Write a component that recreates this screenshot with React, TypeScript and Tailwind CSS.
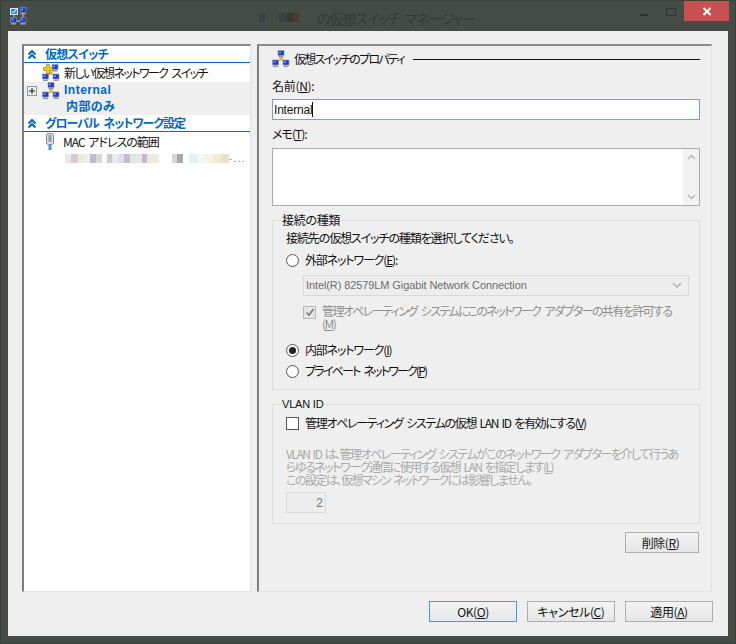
const font = "font-['Noto_Sans_CJK_JP','Liberation_Sans',sans-serif] [font-feature-settings:'palt']";

function U({ children }: { children: string }) {
  return <span className="underline underline-offset-1">{children}</span>;
}

function Monitor({ x, y }: { x: number; y: number }) {
  return (
    <g>
      <rect x={x} y={y} width="6" height="5" fill="#1d3cc4" stroke="#8d99b8" strokeWidth="0.6" />
      <rect x={x + 1} y={y + 1} width="2" height="2" fill="#6f8cf0" />
      <rect x={x + 0.5} y={y + 5.5} width="5" height="1.6" fill="#9a9a9a" />
    </g>
  );
}

function SwitchIcon({ plus = false }: { plus?: boolean }) {
  return (
    <svg width="18" height="18" viewBox="0 0 18 18" className="shrink-0">
      <path d="M9 6v4M4 11.5 L9 9.5 L14 11.5" stroke="#c9a23a" strokeWidth="1" fill="none" />
      <Monitor x={plus ? 10 : 6} y={0.5} />
      <Monitor x={0.5} y={10} />
      <Monitor x={11} y={10} />
      <rect x="7.5" y="8" width="3" height="2.5" fill="#f0b400" />
      {plus && <path d="M4.5 0.5h3v3h3v3h-3v3h-3v-3h-3v-3h3z" fill="#f3c618" stroke="#a5851c" strokeWidth="0.7" />}
    </svg>
  );
}

function AppIcon() {
  return (
    <svg width="18" height="18" viewBox="0 0 18 18" className="shrink-0">
      <path d="M4 8v5M13 7v5M5 14h8" stroke="#c7ccd0" strokeWidth="1" fill="none" />
      <Monitor x={10} y={0.5} />
      <Monitor x={0.5} y={10.5} />
      <Monitor x={10} y={10.5} />
      <rect x="0.5" y="1.5" width="7" height="6" fill="#2a8fd8" stroke="#dce8f0" />
      <path d="M2 4.5l1.5 1.5 3-4" stroke="#ffffff" strokeWidth="1" fill="none" />
    </svg>
  );
}

function Collapse() {
  return (
    <svg width="10" height="9" viewBox="0 0 10 9" className="shrink-0">
      <path d="M1.5 4.5 5 1l3.5 3.5M1.5 8.5 5 5l3.5 3.5" stroke="#0066cc" strokeWidth="2" fill="none" />
    </svg>
  );
}

function Radio({ on = false }: { on?: boolean }) {
  return (
    <span className="w-[13px] h-[13px] rounded-full border border-[#555] bg-white flex items-center justify-center shrink-0">
      {on && <span className="w-[7px] h-[7px] rounded-full bg-[#222]" />}
    </span>
  );
}

function Blur({ cells }: { cells: [number, string][] }) {
  return (
    <div className="flex h-[9px]">
      {cells.map(([w, c], i) => (
        <span key={i} className="h-full" style={{ width: w, background: c }} />
      ))}
    </div>
  );
}

function Section({ label, tracking }: { label: string; tracking: string }) {
  return (
    <div className="flex items-center h-[16px] border-b border-[#0066cc] pl-[3px] box-content">
      <Collapse />
      <span className={`ml-[8px] text-[12px] font-bold text-[#0066cc] leading-none ${tracking}`}>{label}</span>
    </div>
  );
}

function Btn({ children, w = "w-[88px]", primary = false, pad = "" }: { children: React.ReactNode; w?: string; primary?: boolean; pad?: string }) {
  return (
    <div className={`${w} ${pad} h-[21px] flex items-center justify-center text-[12px] text-[#111] tracking-[-0.4px] bg-gradient-to-b from-[#f3f3f3] to-[#e6e6e6] border ${primary ? "border-[#3f9ae8]" : "border-[#aeaeae]"}`}>
      {children}
    </div>
  );
}

export default function App() {
  return (
    <div className={`${font} w-[736px] h-[644px] bg-[#454c46] border border-[#3a403b] flex flex-col overflow-hidden`}>
      <header className="h-[30px] shrink-0 flex items-start">
        <div className="ml-[9px] mt-[6px]">
          <AppIcon />
        </div>
        <div className="ml-[231px] mt-[12px] w-[6px] h-[9px] bg-[#3a4248]" />
        <div className="ml-[14px] mt-[12px] flex h-[9px]">
          <span className="w-[8px] bg-[#3a4248]" />
          <span className="w-[6px] bg-[#3d3533]" />
          <span className="w-[6px] bg-[#4a3a38]" />
        </div>
        <span className="ml-[18px] mt-[6px] text-[14px] text-[#343a36] leading-[22px] tracking-[-1.1px] [word-spacing:3px]">の仮想スイッチ マネージャー</span>
        <div className="ml-auto flex">
          <span className="w-[8px] h-[2px] bg-[#2c312d] mt-[13px] mr-[18px]" />
          <span className="w-[10px] h-[8px] border border-[#2f3530] mt-[7px] mr-[8px]" />
          <div className="w-[45px] h-[20px] bg-[#c75050] flex items-center justify-center mr-[6px]">
            <svg width="10" height="9" viewBox="0 0 10 9">
              <path d="M1.5 1 8.5 8M8.5 1 1.5 8" stroke="#fff" strokeWidth="2" />
            </svg>
          </div>
        </div>
      </header>

      <div className="mx-[7px] h-[605px] bg-[#efefef] flex flex-col">
        <div className="flex pl-[14px] pt-[13px] gap-[6px]">
          <aside className="w-[229px] h-[548px] bg-white border-t-2 border-l-2 border-t-[#8a8a8a] border-l-[#7c7c7c] border-r border-b border-r-[#e2e2e2] border-b-[#e2e2e2] text-[12px] text-[#111]">
            <Section label="仮想スイッチ" tracking="tracking-[-0.7px]" />
            <div className="h-[19px] flex items-center pl-[18px]">
              <SwitchIcon plus />
              <span className="ml-[4px] tracking-[-1.6px] [word-spacing:3px] leading-none">新しい仮想ネットワーク スイッチ</span>
            </div>
            <div className="h-[33px] bg-[#efefef] flex items-start pl-[3px]">
              <span className="w-[10px] h-[10px] mt-[4px] border border-[#8a9aa8] bg-[#eef2f5] flex items-center justify-center shrink-0">
                <svg width="6" height="6" viewBox="0 0 6 6"><path d="M0 3h6M3 0v6" stroke="#111" /></svg>
              </span>
              <span className="ml-[5px]"><SwitchIcon /></span>
              <div className="ml-[4px] font-bold text-[#0066cc] text-[12px] leading-[15px] pt-[1px]">
                <div className="font-['Liberation_Sans','Noto_Sans_CJK_JP',sans-serif] tracking-[0.5px]">Internal</div>
                <div className="ml-[2px] tracking-[0.4px]">内部のみ</div>
              </div>
            </div>
            <Section label="グローバル ネットワーク設定" tracking="tracking-[-1px] [word-spacing:3px]" />
            <div className="h-[19px] flex items-center pl-[20px]">
              <svg width="12" height="18" viewBox="0 0 12 18" className="shrink-0">
                <rect x="2.5" y="0.5" width="7" height="11" rx="2" fill="#d9dfe3" stroke="#7f8b94" />
                <rect x="4.5" y="2" width="3" height="7" fill="#8fa0ad" />
                <path d="M6 12v5" stroke="#2e9be0" strokeWidth="3" />
              </svg>
              <span className="ml-[7px] tracking-[-1px] [word-spacing:2px] leading-none">MAC アドレスの範囲</span>
            </div>
            <div className="flex items-center pl-[41px] mt-[3px]">
              <Blur cells={[[6, "#ece6ec"], [7, "#d8c8d8"], [6, "#f0ecd8"], [6, "#eeeeee"], [6, "#c0bcd0"], [6, "#d8d8d8"], [5, "#ffffff"], [5, "#cccccc"], [6, "#e4ecec"], [6, "#e0dce8"], [6, "#c8b8d0"], [6, "#dce8d8"], [6, "#ece4ec"], [5, "#c8b8cc"], [6, "#ece8e0"], [6, "#f0ecdc"], [13, "#ffffff"], [5, "#d4d4d4"], [6, "#a8a8a8"], [6, "#ffffff"], [9, "#e0f2f2"], [7, "#f2f8f8"], [9, "#f6f2e0"], [7, "#f0ead8"], [8, "#ece0c8"]]} />
              <span className="text-[9px] leading-none text-[#777] tracking-[1.5px]">-...</span>
            </div>
          </aside>

          <main className="w-[455px] h-[548px] border-t-2 border-l-2 border-t-[#8a8a8a] border-l-[#7c7c7c] border-r border-b border-r-[#e2e2e2] border-b-[#e2e2e2] text-[12px] text-[#111] pl-[13px] pr-[11px]">
            <div className="flex items-center h-[18px] mt-[4px]">
              <SwitchIcon />
              <span className="ml-[4px] tracking-[-1.75px] leading-none">仮想スイッチのプロパティ</span>
              <span className="ml-[9px] flex-1 h-px bg-[#111]" />
            </div>
            <div className="mt-[10px] h-[16px] leading-[16px] tracking-[-0.3px]">名前(<U>N</U>):</div>
            <div className="mt-[5px] h-[21px] w-[428px] bg-white border border-[#6fa3d8] flex items-center pl-[1px] leading-none font-['Liberation_Sans','Noto_Sans_CJK_JP',sans-serif] tracking-[-0.2px]">
              Internal<span className="inline-block w-px h-[15px] bg-[#111]" />
            </div>
            <div className="mt-[6px] h-[16px] leading-[16px] tracking-[-1px]">メモ(<U>T</U>):</div>
            <div className="mt-[6px] h-[58px] w-[428px] bg-white border border-[#ababab] flex justify-end">
              <div className="w-[16px] bg-[#f2f2f2] flex flex-col justify-between items-center py-[5px]">
                <svg width="9" height="6" viewBox="0 0 9 6"><path d="M1 5l3.5-3.5L8 5" stroke="#b5b5b5" strokeWidth="1.5" fill="none" /></svg>
                <svg width="9" height="6" viewBox="0 0 9 6"><path d="M1 1l3.5 3.5L8 1" stroke="#b5b5b5" strokeWidth="1.5" fill="none" /></svg>
              </div>
            </div>

            <fieldset className="mt-[6px] w-[428px] h-[178px] border border-[#dcdcdc] pl-[13px] pr-[9px]">
              <legend className="-ml-[5px] px-[1px] leading-[16px] tracking-[-0.3px]">接続の種類</legend>
              <div className="h-[16px] leading-[16px] mt-[2px] tracking-[-1.1px]">接続先の仮想スイッチの種類を選択してください。</div>
              <div className="flex items-center h-[16px] mt-[6px]">
                <Radio />
                <span className="ml-[6px] tracking-[-1.15px]">外部ネットワーク(<U>E</U>):</span>
              </div>
              <div className="ml-[17px] mt-[7px] h-[21px] w-[386px] border border-[#d9d9d9] bg-[#ededed] flex items-center justify-between pl-[2px] pr-[6px] text-[#6d6d6d] font-['Liberation_Sans',sans-serif] text-[11px]">
                <span className="tracking-[-0.1px]">Intel(R) 82579LM Gigabit Network Connection</span>
                <svg width="10" height="7" viewBox="0 0 10 7"><path d="M1 1l4 4 4-4" stroke="#b9b9b9" strokeWidth="1.6" fill="none" /></svg>
              </div>
              <div className="ml-[17px] mt-[8px] flex items-start text-[#8f8f8f]">
                <span className="w-[13px] h-[13px] mt-[2px] border border-[#b8b8b8] bg-[#e6e6e6] flex items-center justify-center shrink-0">
                  <svg width="10" height="9" viewBox="0 0 10 9"><path d="M1.5 4.5 4 7l4.5-6" stroke="#7a7a7a" strokeWidth="1.7" fill="none" /></svg>
                </span>
                <div className="ml-[6px] leading-[13px] tracking-[-1.6px] [word-spacing:3px] whitespace-nowrap">
                  管理オペレーティング システムにこのネットワーク アダプターの共有を許可する<br />
                  (<U>M</U>)
                </div>
              </div>
              <div className="flex items-center h-[16px] mt-[12px]">
                <Radio on />
                <span className="ml-[6px] tracking-[-1.15px]">内部ネットワーク(<U>I</U>)</span>
              </div>
              <div className="flex items-center h-[16px] mt-[5px]">
                <Radio />
                <span className="ml-[6px] tracking-[-1.8px] [word-spacing:3px]">プライベート ネットワーク(<U>P</U>)</span>
              </div>
            </fieldset>

            <fieldset className="mt-[6px] w-[428px] h-[128px] border border-[#dcdcdc] pl-[13px]">
              <legend className="-ml-[5px] px-[1px] leading-[16px] font-['Liberation_Sans',sans-serif] text-[11px] tracking-[-0.2px]">VLAN ID</legend>
              <div className="flex items-center h-[16px] mt-[3px]">
                <span className="w-[13px] h-[13px] border border-[#555] bg-white shrink-0" />
                <span className="ml-[6px] tracking-[-1.3px] [word-spacing:2px]">管理オペレーティング システムの仮想 LAN ID を有効にする(<U>V</U>)</span>
              </div>
              <div className="mt-[16px] leading-[13px] text-[#a9a9a9] tracking-[-1.5px] [word-spacing:2px] whitespace-nowrap">
                VLAN ID は、管理オペレーティング システムがこのネットワーク アダプターを介して行うあ<br />
                らゆるネットワーク通信に使用する仮想 LAN を指定します(<U>L</U>)<br />
                この設定は、仮想マシン ネットワークには影響しません。
              </div>
              <div className="mt-[6px] w-[40px] h-[21px] border border-[#d9d9d9] bg-[#ededed] flex items-center justify-end pr-[2px] text-[#777] font-['Liberation_Sans',sans-serif]">2</div>
            </fieldset>

            <div className="flex justify-end w-[427px] mt-[8px]">
              <Btn w="w-[74px]" pad="pr-[3px]">削除(<U>R</U>)</Btn>
            </div>
          </main>
        </div>

        <div className="flex justify-end gap-[10px] pr-[15px] mt-[9px]">
          <Btn primary>OK(<U>O</U>)</Btn>
          <Btn>キャンセル(<U>C</U>)</Btn>
          <Btn>適用(<U>A</U>)</Btn>
        </div>
      </div>
    </div>
  );
}
